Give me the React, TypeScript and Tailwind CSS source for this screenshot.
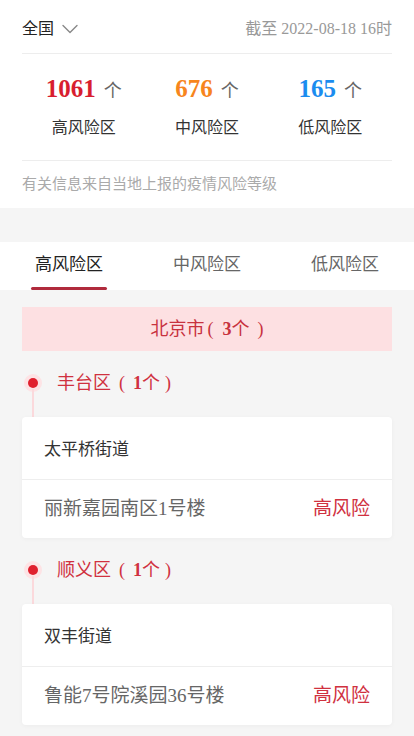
import { ChevronDown } from "lucide-react";

const font = { fontFamily: '"Liberation Serif", "Noto Sans CJK SC", serif' };

const stats = [
  { count: "1061", label: "高风险区", color: "text-[#d81e2f]" },
  { count: "676", label: "中风险区", color: "text-[#f7851d]" },
  { count: "165", label: "低风险区", color: "text-[#1b8cef]" }
];

const districts = [
  { name: "丰台区", count: 1, street: "太平桥街道", place: "丽新嘉园南区1号楼" },
  { name: "顺义区", count: 1, street: "双丰街道", place: "鲁能7号院溪园36号楼" }
];

function Summary() {
  return (
    <section className="bg-white px-[22px]">
      <div className="flex h-[54px] items-center justify-between border-b border-[#ededed] pt-[4px]">
        <div className="flex items-center text-[16px] text-[#222]">
          <span>全国</span>
          <ChevronDown className="ml-[2px] h-[28px] w-[28px] text-[#888]" strokeWidth={1.2} />
        </div>
        <span className="text-[16px] text-[#999]">截至 2022-08-18 16时</span>
      </div>
      <div className="grid h-[107px] grid-cols-3 border-b border-[#ededed] pt-[20px]">
        {stats.map(s => (
          <div key={s.label} className="flex flex-col items-center">
            <div className="flex items-baseline gap-[8px]">
              <span className={`text-[25px] font-bold leading-[30px] ${s.color}`}>{s.count}</span>
              <span className="text-[18px] text-[#666]">个</span>
            </div>
            <span className="mt-[11px] text-[16px] text-[#333]">{s.label}</span>
          </div>
        ))}
      </div>
      <div className="flex h-[47px] items-center text-[15px] text-[#aaa]">
        有关信息来自当地上报的疫情风险等级
      </div>
    </section>
  );
}

function Tabs() {
  const tabs = ["高风险区", "中风险区", "低风险区"];
  return (
    <div className="mt-[34px] grid h-[48px] grid-cols-3 bg-white">
      {tabs.map((t, i) => (
        <div key={t} className="relative flex items-center justify-center pb-[2px]">
          <span className={`text-[17px] ${i === 0 ? "text-[#222]" : "text-[#666]"}`}>{t}</span>
          {i === 0 && (
            <span className="absolute bottom-0 left-[31px] h-[3px] w-[76px] rounded-full bg-[#b02a3c]" />
          )}
        </div>
      ))}
    </div>
  );
}

function DistrictBlock({ d }: { d: (typeof districts)[number] }) {
  return (
    <div>
      <div className="mt-[16px] flex h-[32px] items-center">
        <div className="relative flex w-[22px] justify-center">
          <span className="h-[18px] w-[18px] rounded-full bg-[#fde3e5] p-[4px]">
            <span className="block h-[10px] w-[10px] rounded-full bg-[#e0202e]" />
          </span>
          <span className="absolute left-[10px] top-[15px] h-[37px] w-[2px] bg-[#fbd9dc]" />
        </div>
        <span className="ml-[13px] flex items-center text-[18px] text-[#d0313f]">
          {d.name}
          <span className="ml-[8px] mr-[8px]">(</span>
          <b className="font-bold">{d.count}</b>个
          <span className="ml-[5px]">)</span>
        </span>
      </div>
      <div className="relative mt-[18px] rounded-[4px] bg-white shadow-[0_1px_4px_rgba(0,0,0,0.04)]">
        <div className="flex h-[63px] items-center border-b border-[#eeeeee] px-[22px] pt-[3px] text-[17px] text-[#333]">
          {d.street}
        </div>
        <div className="flex h-[58px] items-center justify-between px-[22px] text-[19px]">
          <span className="text-[#666]">{d.place}</span>
          <span className="text-[#d0313f]">高风险</span>
        </div>
      </div>
    </div>
  );
}

export default function App() {
  return (
    <div className="min-h-[736px] bg-[#f5f5f5]" style={font}>
      <Summary />
      <Tabs />
      <div className="px-[22px] pt-[17px] pb-[20px]">
        <div className="flex h-[44px] items-center justify-center bg-[#fde0e2] text-[18px] text-[#c8323e]">
          北京市
          <span className="ml-[3px] mr-[9px]">(</span>
          <b className="font-bold">3</b>个
          <span className="ml-[8px]">)</span>
        </div>
        {districts.map(d => (
          <DistrictBlock key={d.name} d={d} />
        ))}
      </div>
    </div>
  );
}
